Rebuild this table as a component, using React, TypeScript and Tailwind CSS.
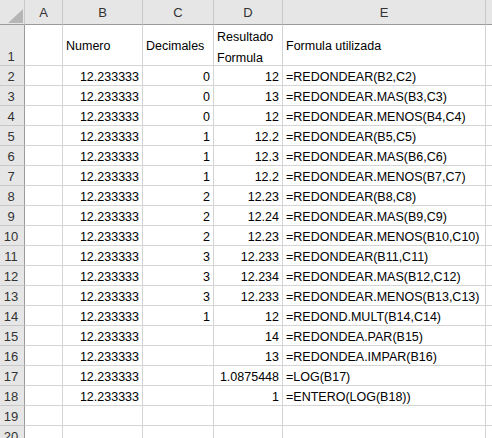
const cols = ["A", "B", "C", "D", "E"]

const rows: [string, string, string, string][] = [
  ["12.233333", "0", "12", "=REDONDEAR(B2,C2)"],
  ["12.233333", "0", "13", "=REDONDEAR.MAS(B3,C3)"],
  ["12.233333", "0", "12", "=REDONDEAR.MENOS(B4,C4)"],
  ["12.233333", "1", "12.2", "=REDONDEAR(B5,C5)"],
  ["12.233333", "1", "12.3", "=REDONDEAR.MAS(B6,C6)"],
  ["12.233333", "1", "12.2", "=REDONDEAR.MENOS(B7,C7)"],
  ["12.233333", "2", "12.23", "=REDONDEAR(B8,C8)"],
  ["12.233333", "2", "12.24", "=REDONDEAR.MAS(B9,C9)"],
  ["12.233333", "2", "12.23", "=REDONDEAR.MENOS(B10,C10)"],
  ["12.233333", "3", "12.233", "=REDONDEAR(B11,C11)"],
  ["12.233333", "3", "12.234", "=REDONDEAR.MAS(B12,C12)"],
  ["12.233333", "3", "12.233", "=REDONDEAR.MENOS(B13,C13)"],
  ["12.233333", "1", "12", "=REDOND.MULT(B14,C14)"],
  ["12.233333", "", "14", "=REDONDEA.PAR(B15)"],
  ["12.233333", "", "13", "=REDONDEA.IMPAR(B16)"],
  ["12.233333", "", "1.0875448", "=LOG(B17)"],
  ["12.233333", "", "1", "=ENTERO(LOG(B18))"],
  ["", "", "", ""],
  ["", "", "", ""],
]

const cell = "border-r border-b border-[#d4d4d4] flex leading-[15px] whitespace-nowrap overflow-hidden"
const rowHead =
  "bg-[#e6e6e6] border-r border-r-[#9b9b9b] border-b border-b-[#c8c8c8] flex items-end justify-center pr-[2px] leading-[15px] text-[#333]"

export default function App() {
  return (
    <div
      className="w-[492px] h-[438px] overflow-hidden bg-white text-[12.5px] text-black"
      style={{ fontFamily: '"Liberation Sans", Arial, sans-serif' }}
    >
      <div className="grid grid-cols-[25px_38px_80px_71px_69px_203px_1fr] grid-rows-[25px_41px_repeat(19,20px)]">
        {/* corner */}
        <div className="bg-[#e6e6e6] border-r border-r-[#c8c8c8] border-b border-b-[#9b9b9b] relative">
          <svg className="absolute left-[8px] top-[9px]" width="15" height="14" viewBox="0 0 15 14">
            <polygon points="0,14 15,14 15,0" fill="#b5b5b5" />
          </svg>
        </div>
        {cols.map((c) => (
          <div
            key={c}
            className="bg-[#e6e6e6] border-r border-r-[#c8c8c8] border-b border-b-[#9b9b9b] flex items-center justify-center text-[13px] text-[#333] pt-[1px]"
          >
            {c}
          </div>
        ))}
        <div className="bg-[#e6e6e6] border-b border-b-[#9b9b9b]" />

        {/* row 1 */}
        <div className={rowHead}>
          <span className="pb-[1px] text-[13px]">1</span>
        </div>
        <div className={cell} />
        <div className={`${cell} items-center pl-[3px] pt-[3px]`}>Numero</div>
        <div className={`${cell} items-center pl-[3px] pt-[3px]`}>Decimales</div>
        <div className={`${cell} items-start pl-[3px]`}>
          <div className="leading-[21px] pt-[2px]">
            Resultado
            <br />
            Formula
          </div>
        </div>
        <div className={`${cell} items-center pl-[3px] pt-[3px]`}>Formula utilizada</div>
        <div className="border-b border-[#d4d4d4]" />

        {rows.map((r, i) => (
          <Row key={i} n={i + 2} r={r} />
        ))}
      </div>
    </div>
  )
}

function Row({ n, r }: { n: number; r: [string, string, string, string] }) {
  return (
    <>
      <div className={rowHead}>
        <span className="pb-[1px] text-[13px]">{n}</span>
      </div>
      <div className={cell} />
      <div className={`${cell} items-end justify-end pr-[3px]`}>{r[0]}</div>
      <div className={`${cell} items-end justify-end pr-[3px]`}>{r[1]}</div>
      <div className={`${cell} items-end justify-end pr-[3px]`}>{r[2]}</div>
      <div className={`${cell} items-end pl-[3px]`}>{r[3]}</div>
      <div className="border-b border-[#d4d4d4]" />
    </>
  )
}
